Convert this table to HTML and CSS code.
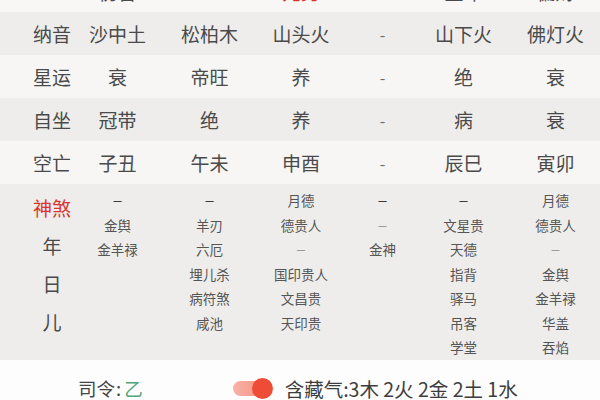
FILE: index.html
```html
<!DOCTYPE html>
<html lang="zh">
<head>
<meta charset="utf-8">
<title>命盘</title>
<link rel="stylesheet" href="styles.css">
</head>
<body>
<div class="sheet">
  <div class="cut">
    <div class="grid row cut-row">
      <span></span><span>伤官</span><span></span><span class="red">元男</span><span></span><span>正印</span><span>偏财</span>
    </div>
  </div>
  <div class="grid row dark">
    <span>纳音</span><span>沙中土</span><span>松柏木</span><span>山头火</span><span class="dash">-</span><span>山下火</span><span>佛灯火</span>
  </div>
  <div class="grid row light">
    <span>星运</span><span>衰</span><span>帝旺</span><span>养</span><span class="dash">-</span><span>绝</span><span>衰</span>
  </div>
  <div class="grid row dark">
    <span>自坐</span><span>冠带</span><span>绝</span><span>养</span><span class="dash">-</span><span>病</span><span>衰</span>
  </div>
  <div class="grid row light">
    <span>空亡</span><span>子丑</span><span>午未</span><span>申酉</span><span class="dash">-</span><span>辰巳</span><span>寅卯</span>
  </div>
  <div class="grid shensha dark">
    <div class="labels">
      <span class="red">神煞</span><span>年</span><span>日</span><span>儿</span>
    </div>
    <div class="list">
      <span class="d1">—</span><span>金舆</span><span>金羊禄</span>
    </div>
    <div class="list">
      <span class="d1">—</span><span>羊刃</span><span>六厄</span><span>埋儿杀</span><span>病符煞</span><span>咸池</span>
    </div>
    <div class="list">
      <span>月德</span><span>德贵人</span><span class="d2">—</span><span>国印贵人</span><span>文昌贵</span><span>天印贵</span>
    </div>
    <div class="list">
      <span class="d1">—</span><span class="d2">—</span><span>金神</span>
    </div>
    <div class="list">
      <span class="d1">—</span><span>文星贵</span><span>天德</span><span>指背</span><span>驿马</span><span>吊客</span><span>学堂</span>
    </div>
    <div class="list">
      <span>月德</span><span>德贵人</span><span class="d2">—</span><span>金舆</span><span>金羊禄</span><span>华盖</span><span>吞焰</span>
    </div>
  </div>
  <div class="footer">
    <span class="siling">司令<span class="colon">:</span><span class="green">乙</span></span>
    <span class="toggle"><span class="knob"></span></span>
    <span class="hidden-qi">含藏气:3木 2火 2金 2土 1水</span>
  </div>
</div>
</body>
</html>
```

FILE: styles.css
```css
html, body {
  margin: 0;
  padding: 0;
}

body {
  width: 600px;
  height: 400px;
  overflow: hidden;
  background: #f3f2f0;
  font-family: "Noto Sans CJK SC", "Noto Sans", sans-serif;
  color: #4a4a4a;
}

.sheet {
  width: 600px;
  overflow: hidden;
}

.grid {
  display: grid;
  grid-template-columns: 64px 67px 117px 66px 97px 65px 119px;
  padding-left: 20px;
  width: 615px;
  justify-items: center;
}

.row {
  height: 43px;
  align-items: center;
  font-size: 19px;
  line-height: 1;
  letter-spacing: 0;
}

.cut {
  height: 12px;
  overflow: hidden;
  background: #f8f7f5;
}

.cut-row {
  margin-top: -30px;
}

.dark {
  background: #eeedeb;
}

.light {
  background: #f7f6f4;
}

.red {
  color: #d8342c;
}

.dash {
  color: #6a6a6a;
  font-size: 16px;
}

.shensha {
  height: 176px;
  align-items: start;
}

.labels {
  display: flex;
  flex-direction: column;
  align-items: center;
  padding-top: 5px;
  font-size: 19px;
  line-height: 38px;
}

.list {
  display: flex;
  flex-direction: column;
  align-items: center;
  padding-top: 4px;
  font-size: 13.5px;
  line-height: 24.5px;
  color: #555;
  white-space: nowrap;
}

.d1 {
  color: #3a3a3a;
  font-weight: bold;
  font-size: 10px;
}

.d2 {
  color: #8a8a8a;
  font-size: 10px;
}

.footer {
  height: 40px;
  background: #fdfdfd;
  display: flex;
  align-items: center;
  padding-left: 78px;
  padding-top: 16px;
  box-sizing: border-box;
  font-size: 18.5px;
  color: #444;
}

.siling {
  display: inline-flex;
  align-items: center;
}

.colon {
  margin: 0 3px 0 1px;
}

.green {
  color: #4fa47a;
}

.toggle {
  position: relative;
  width: 40px;
  height: 15px;
  margin-left: 90px;
  margin-right: 12px;
}

.toggle::before {
  content: "";
  position: absolute;
  left: 0;
  top: 0;
  width: 34px;
  height: 15px;
  border-radius: 8px;
  background: linear-gradient(90deg, #f8b3a6, #f48f7e);
}

.knob {
  position: absolute;
  right: 0;
  top: -3px;
  width: 21px;
  height: 21px;
  border-radius: 50%;
  background: #ef4c38;
}

.hidden-qi {
  font-size: 19.5px;
  color: #3d3d3d;
}
```
